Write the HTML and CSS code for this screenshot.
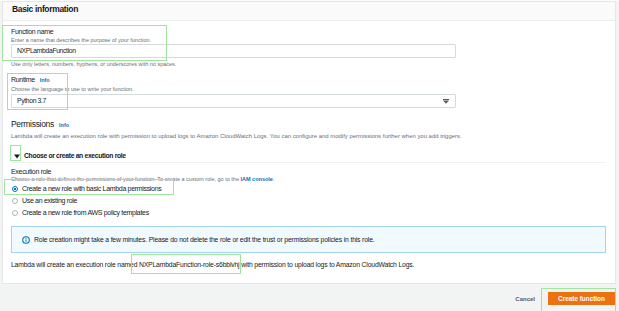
FILE: index.html
```html
<!DOCTYPE html>
<html>
<head>
<meta charset="utf-8">
<link rel="stylesheet" href="styles.css">
</head>
<body>
<div class="page">
  <div class="card">
    <div class="card-header">Basic information</div>
    <div class="card-body">
      <div class="label l-fn">Function name</div>
      <div class="desc d-fn">Enter a name that describes the purpose of your function.</div>
      <div class="input">NXPLambdaFunction</div>
      <div class="desc hint">Use only letters, numbers, hyphens, or underscores with no spaces.</div>
      <div class="label l-rt">Runtime <span class="info">Info</span></div>
      <div class="desc d-rt">Choose the language to use to write your function.</div>
      <div class="input select">
        <span>Python 3.7</span>
        <svg class="caret" width="6" height="5" viewBox="0 0 6 5"><rect x="0" y="0" width="6" height="1" fill="#545b64"/><path d="M0 1.5 H6 L3 4.8 Z" fill="#545b64"/></svg>
      </div>
      <div class="section-title">Permissions <span class="info">Info</span></div>
      <div class="desc d-perm">Lambda will create an execution role with permission to upload logs to Amazon CloudWatch Logs. You can configure and modify permissions further when you add triggers.</div>
      <div class="expander">
        <svg class="tri" width="6" height="5" viewBox="0 0 6 5"><path d="M0 0.5 H6 L3 4.5 Z" fill="#16191f"/></svg>
        <span>Choose or create an execution role</span>
      </div>
      <div class="label l-er">Execution role</div>
      <div class="desc d-er">Choose a role that defines the permissions of your function. To create a custom role, go to the <span class="link">IAM console</span>.</div>
      <div class="radios">
        <div class="radio"><span class="dot on"></span>Create a new role with basic Lambda permissions</div>
        <div class="radio"><span class="dot"></span>Use an existing role</div>
        <div class="radio"><span class="dot"></span>Create a new role from AWS policy templates</div>
      </div>
      <div class="alert">
        <svg class="icon" width="8" height="8" viewBox="0 0 8 8"><circle cx="4" cy="4" r="3.3" fill="none" stroke="#0073bb" stroke-width="1.1"/><rect x="3.5" y="3.4" width="1" height="2.4" fill="#0073bb"/><rect x="3.5" y="2" width="1" height="0.9" fill="#0073bb"/></svg>
        <span>Role creation might take a few minutes. Please do not delete the role or edit the trust or permissions policies in this role.</span>
      </div>
      <div class="final">Lambda will create an execution role named NXPLambdaFunction-role-s6bblvhj with permission to upload logs to Amazon CloudWatch Logs.</div>
    </div>
  </div>
  <div class="footer">
    <span class="cancel">Cancel</span>
    <span class="btn">Create function</span>
  </div>
  <div class="mark m1"></div>
  <div class="mark m2"></div>
  <div class="mark m3"></div>
  <div class="mark m4"></div>
  <div class="mark m5"></div>
  <div class="mark m6"></div>
</div>
</body>
</html>
```
FILE: styles.css
```css
html, body {
  margin: 0;
  padding: 0;
}
body {
  background: #f2f3f3;
  font-family: "Liberation Sans", Arial, sans-serif;
  color: #16191f;
  width: 619px;
  height: 311px;
  overflow: hidden;
}
.page {
  position: relative;
  width: 619px;
  height: 311px;
  border-top: 1px solid #fbfbfb;
  box-sizing: border-box;
}
.card {
  margin-left: 2px;
  width: 614px;
  background: #fff;
  border: 1px solid #e4e7e7;
  box-sizing: border-box;
}
.card-header {
  height: 19px;
  background: #fafafa;
  border-bottom: 1px solid #eaeded;
  box-sizing: border-box;
  padding-left: 9px;
  font-weight: bold;
  font-size: 8.5px;
  letter-spacing: -0.34px;
  line-height: 15px;
}
.card-body {
  padding: 0 9px 13px 8px;
}
.label {
  font-size: 7px;
  letter-spacing: -0.3px;
  line-height: 9px;
}
.l-fn { margin-top: 6px; }
.l-rt { margin-top: 7px; }
.l-er { margin-top: 4px; }
.info {
  color: #0073bb;
  font-weight: bold;
  font-size: 5.5px;
  letter-spacing: 0;
  margin-left: 3px;
}
.desc {
  font-size: 5.5px;
  color: #687078;
  line-height: 8px;
}
.d-rt { line-height: 9px; }
.hint { margin-top: 2px; }
.d-perm { margin-top: 1px; font-size: 5.95px; }
.d-er { line-height: 7px; }
.link { color: #0073bb; font-weight: bold; }
.input {
  width: 445px;
  height: 14px;
  border: 1px solid #d5dbdb;
  border-radius: 1px;
  box-sizing: border-box;
  padding-left: 5px;
  font-size: 6.8px;
  letter-spacing: -0.35px;
  line-height: 12px;
  display: flex;
  align-items: center;
}
.select {
  margin-top: 0;
  justify-content: space-between;
  padding-right: 6px;
}
.caret { display: block; }
.section-title {
  margin-top: 10px;
  font-size: 8.5px;
  letter-spacing: -0.3px;
  line-height: 12px;
}
.expander {
  margin-top: 11px;
  display: flex;
  align-items: center;
  gap: 4px;
  font-weight: bold;
  font-size: 6.8px;
  letter-spacing: -0.34px;
  line-height: 10px;
  padding-left: 3px;
  padding-bottom: 1px;
  border-bottom: 1px solid #f0f1f1;
}
.tri { display: block; }
.radios {
  display: flex;
  flex-direction: column;
}
.radio {
  display: flex;
  align-items: center;
  gap: 4px;
  font-size: 7px;
  letter-spacing: -0.32px;
  line-height: 12px;
  padding-left: 1px;
}
.dot {
  width: 6px;
  height: 6px;
  border: 1px solid #aab7b8;
  border-radius: 50%;
  box-sizing: border-box;
  background: #fff;
}
.dot.on {
  border: 1.5px solid #0073bb;
  background: radial-gradient(circle, #0073bb 0 1.2px, #fff 1.4px);
}
.alert {
  margin-top: 7px;
  height: 27px;
  background: #f1faff;
  border: 1px solid #a6d2ee;
  box-sizing: border-box;
  display: flex;
  align-items: center;
  gap: 4px;
  padding-left: 10px;
  font-size: 6.8px;
  letter-spacing: -0.156px;
}
.icon { display: block; }
.final {
  margin-top: 7px;
  font-size: 6.8px;
  letter-spacing: -0.16px;
  line-height: 10px;
}
.footer {
  display: flex;
  justify-content: flex-end;
  align-items: center;
  gap: 13px;
  margin-top: 8px;
  padding-right: 4px;
}
.cancel {
  font-weight: bold;
  font-size: 6px;
  color: #545b64;
}
.btn {
  width: 67px;
  height: 13px;
  background: #ec7211;
  color: #fff;
  font-weight: bold;
  font-size: 6.4px;
  display: flex;
  align-items: center;
  justify-content: center;
}
.mark {
  position: absolute;
  border: 1.5px solid #9fe59f;
  box-sizing: border-box;
}
.m1 { left: 2px; top: 24px; width: 165px; height: 36px; }
.m2 { left: 7px; top: 72px; width: 61px; height: 37px; }
.m3 { left: 10px; top: 144px; width: 11px; height: 16px; }
.m4 { left: 4px; top: 178px; width: 170px; height: 16px; }
.m5 { left: 131px; top: 253px; width: 110px; height: 20px; }
.m6 { left: 541px; top: 287px; width: 75px; height: 24px; }
```
